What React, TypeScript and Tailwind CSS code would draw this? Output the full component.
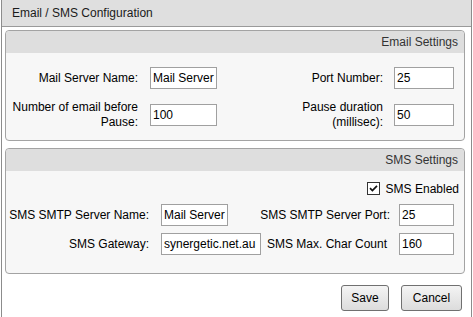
import React from "react";

const font = { fontFamily: '"Liberation Sans", Arial, sans-serif' };

function TextBox({ value, width }: { value: string; width: string }) {
  return (
    <input
      type="text"
      defaultValue={value}
      className={`${width} h-[22px] border border-[#a0a0a0] bg-white pl-[2px] pr-0 text-[12px] text-black outline-none`}
      style={font}
    />
  );
}

function PanelHeader({ title }: { title: string }) {
  return (
    <div className="flex h-[22px] items-center justify-end rounded-t-[4px] bg-[#dedede] pr-[6px] text-[#333]">
      {title}
    </div>
  );
}

function CheckBox() {
  return (
    <span className="flex h-[13px] w-[13px] items-center justify-center border border-[#333] bg-white">
      <svg width="9" height="9" viewBox="0 0 9 9">
        <path d="M1 4.2 L3.4 6.6 L8 1.8" fill="none" stroke="#111" strokeWidth="1.7" />
      </svg>
    </span>
  );
}

export default function App() {
  return (
    <div className="h-[317px] w-[473px] bg-white text-[12px] text-black" style={font}>
      <div className="ml-px flex h-full w-[471px] flex-col border-x border-[#8c8c8c]">
        {/* title bar */}
        <div className="flex h-[27px] shrink-0 items-center border-b border-[#9a9a9a] bg-[#dfdfdf] pl-[10px] text-[#1a1a1a]">
          Email / SMS Configuration
        </div>

        {/* email settings */}
        <div className="ml-[3px] mt-[3px] h-[111px] w-[460px] rounded-[4px] border border-[#a3a3a3] bg-[#f7f7f7]">
          <PanelHeader title="Email Settings" />
          <div className="pl-[2px] pt-[14px]">
            <div className="flex h-[22px] items-center">
              <div className="w-[130px] text-right">Mail Server Name:</div>
              <div className="ml-[12px]">
                <TextBox value="Mail Server" width="w-[67px]" />
              </div>
              <div className="ml-[66px] w-[100px] text-right">Port Number:</div>
              <div className="ml-[11px]">
                <TextBox value="25" width="w-[60px]" />
              </div>
            </div>
            <div className="mt-[11px] flex h-[30px] items-center">
              <div className="w-[130px] text-right leading-[15px]">Number of email before Pause:</div>
              <div className="ml-[12px]">
                <TextBox value="100" width="w-[67px]" />
              </div>
              <div className="ml-[66px] w-[100px] text-right leading-[15px]">Pause duration (millisec):</div>
              <div className="ml-[11px]">
                <TextBox value="50" width="w-[60px]" />
              </div>
            </div>
          </div>
        </div>

        {/* sms settings */}
        <div className="ml-[3px] mt-[7px] h-[126px] w-[460px] rounded-[4px] border border-[#a3a3a3] bg-[#f7f7f7]">
          <PanelHeader title="SMS Settings" />
          <div className="pt-[10px]">
            <div className="flex h-[15px] items-center justify-end gap-[6px] pr-[5px]">
              <CheckBox />
              <span>SMS Enabled</span>
            </div>
            <div className="mt-[8px] flex h-[22px] items-center">
              <div className="w-[143px] whitespace-nowrap text-right">SMS SMTP Server Name:</div>
              <div className="ml-[12px] w-[100px]">
                <TextBox value="Mail Server" width="w-[67px]" />
              </div>
              <div className="flex w-[129px] justify-end whitespace-nowrap">SMS SMTP Server Port:</div>
              <div className="ml-[9px]">
                <TextBox value="25" width="w-[55px]" />
              </div>
            </div>
            <div className="mt-[7px] flex h-[22px] items-center">
              <div className="w-[143px] whitespace-nowrap text-right">SMS Gateway:</div>
              <div className="ml-[12px] w-[100px]">
                <TextBox value="synergetic.net.au" width="w-[100px]" />
              </div>
              <div className="flex w-[129px] justify-end whitespace-nowrap pr-[3px]">SMS Max. Char Count</div>
              <div className="ml-[9px]">
                <TextBox value="160" width="w-[55px]" />
              </div>
            </div>
          </div>
        </div>

        {/* buttons */}
        <div className="mt-[11px] flex justify-end gap-[12px] pr-[9px]">
          <button className="h-[26px] w-[48px] rounded-[3px] border border-[#707070] bg-gradient-to-b from-[#f4f4f4] to-[#dcdcdc] text-[12px] text-black">
            Save
          </button>
          <button className="h-[26px] w-[61px] rounded-[3px] border border-[#707070] bg-gradient-to-b from-[#f4f4f4] to-[#dcdcdc] text-[12px] text-black">
            Cancel
          </button>
        </div>
      </div>
    </div>
  );
}
